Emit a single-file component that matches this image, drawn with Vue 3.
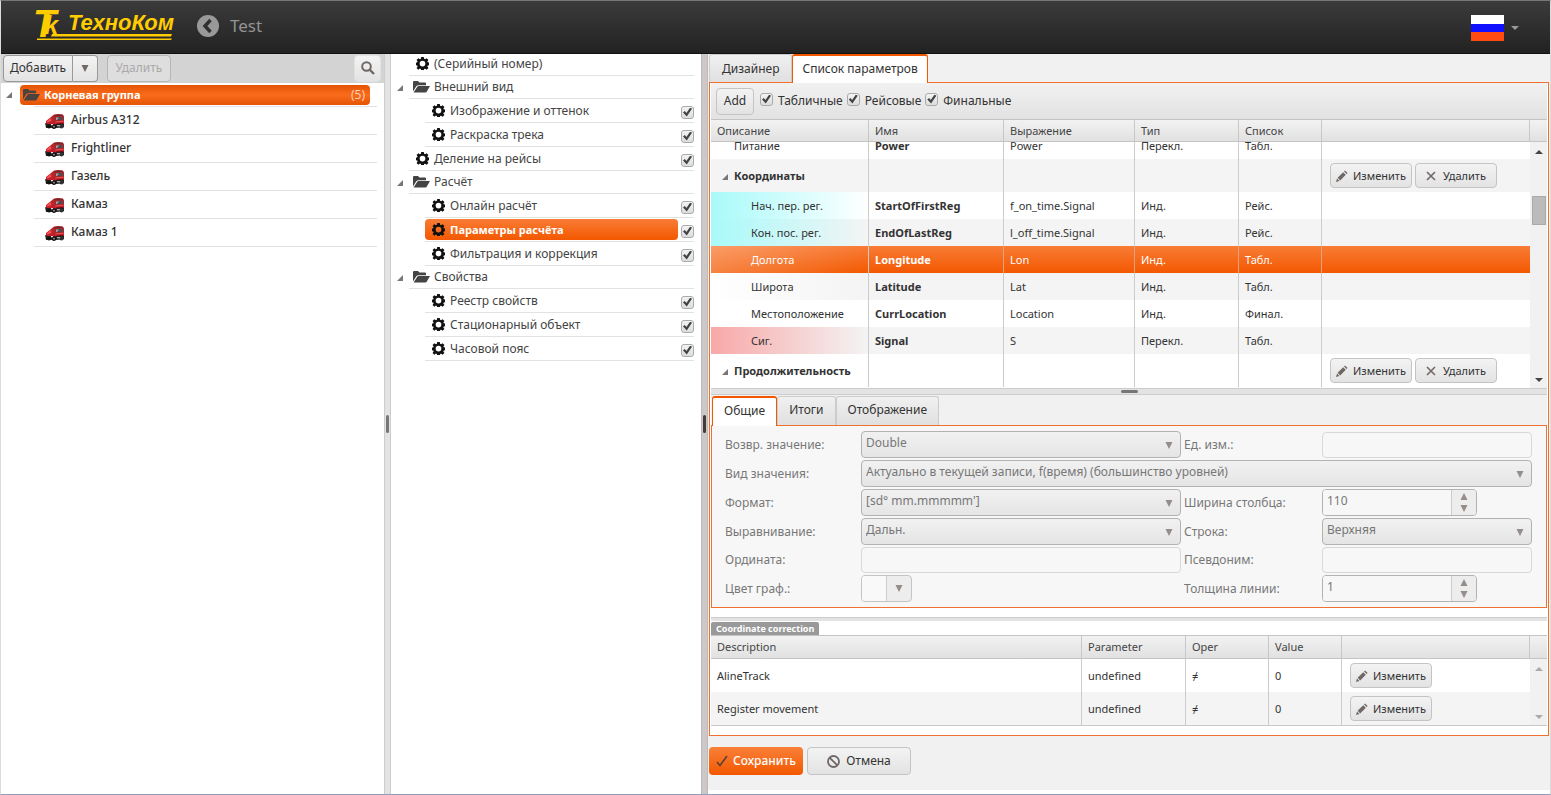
<script setup>
import { ref } from 'vue'

const vehicles = ['Airbus A312', 'Frightliner', 'Газель', 'Камаз', 'Камаз 1']

const nodes = ref([
  { t: '(Серийный номер)', level: 0 },
  { t: 'Внешний вид', folder: true },
  { t: 'Изображение и оттенок', level: 1, check: true },
  { t: 'Раскраска трека', level: 1, check: true },
  { t: 'Деление на рейсы', level: 0, check: true },
  { t: 'Расчёт', folder: true },
  { t: 'Онлайн расчёт', level: 1, check: true },
  { t: 'Параметры расчёта', level: 1, check: true, selected: true },
  { t: 'Фильтрация и коррекция', level: 1, check: true },
  { t: 'Свойства', folder: true },
  { t: 'Реестр свойств', level: 1, check: true },
  { t: 'Стационарный объект', level: 1, check: true },
  { t: 'Часовой пояс', level: 1, check: true }
])

const filters = ref([
  { t: 'Табличные', on: true },
  { t: 'Рейсовые', on: true },
  { t: 'Финальные', on: true }
])

const rows = [
  { d: 'Питание', n: 'Power', e: 'Power', k: 'Перекл.', l: 'Табл.', first: true },
  { d: 'Координаты', group: true },
  { d: 'Нач. пер. рег.', n: 'StartOfFirstReg', e: 'f_on_time.Signal', k: 'Инд.', l: 'Рейс.', tint: 'cyan' },
  { d: 'Кон. пос. рег.', n: 'EndOfLastReg', e: 'l_off_time.Signal', k: 'Инд.', l: 'Рейс.', tint: 'cyan' },
  { d: 'Долгота', n: 'Longitude', e: 'Lon', k: 'Инд.', l: 'Табл.', selected: true },
  { d: 'Широта', n: 'Latitude', e: 'Lat', k: 'Инд.', l: 'Табл.', tint: 'pale' },
  { d: 'Местоположение', n: 'CurrLocation', e: 'Location', k: 'Инд.', l: 'Финал.' },
  { d: 'Сиг.', n: 'Signal', e: 'S', k: 'Перекл.', l: 'Табл.', tint: 'red' },
  { d: 'Продолжительность', group: true }
]

const corrections = ['AlineTrack', 'Register movement']
</script>

<template>
  <div class="app">
    <svg class="defs" aria-hidden="true">
      <symbol id="gear" viewBox="0 0 16 16">
        <path fill-rule="evenodd" d="M6.4 0h3.2l.4 2.2 1.2.5 1.9-1.3 2.2 2.2-1.3 1.9.5 1.1 2.3.4v3l-2.3.4-.5 1.2 1.3 1.9-2.2 2.2-1.9-1.3-1.2.5-.4 2.2H6.4L6 14.8l-1.2-.5-1.9 1.3L.7 13.5 2 11.600l-.5-1.200L0 10V7l1.500-.400L2 5.500.7 3.600l2.200-2.200 1.900 1.300L6 2.200zM8 4.600a3.500 3.500 0 1 0 0 7 3.500 3.500 0 0 0 0-7z" />
      </symbol>
      <symbol id="folder" viewBox="0 0 17 12">
        <path d="M0 10.500V1Q0 0 1 0h4l1.500 1.500H12q1 0 1 1v1.700H5.500Q4 4.200 3.300 5.300zM.6 11.500l3.500-5.400Q4.700 5.100 5.500 5.100H17l-3.300 5.600q-.5.8-1.200.8z" />
      </symbol>
      <symbol id="pencil" viewBox="0 0 12 12">
        <path d="M0 12l1-3.500L3.500 11zM1.600 7.800l5.600-5.600 2.600 2.600-5.600 5.600zM8 1.400l1-1 2.600 2.600-1 1z" />
      </symbol>
      <symbol id="cross" viewBox="0 0 10 10">
        <path d="M1 1l8 8M9 1l-8 8" fill="none" stroke="currentColor" stroke-width="1.600" />
      </symbol>
      <symbol id="down" viewBox="0 0 8 7"><path d="M.5 0h7L4 7z" /></symbol>
      <symbol id="up" viewBox="0 0 8 7"><path d="M.5 7h7L4 0z" /></symbol>
      <symbol id="open" viewBox="0 0 7 7"><path d="M7 0v7H0z" /></symbol>
      <symbol id="truck" viewBox="0 0 20 16">
        <path d="M1 8l5-4 3-2.500Q13 .3 18 1.500l1 2V12l-8 1.500-8-1-2-1z" fill="#c21f27" />
        <path d="M9.500 2.300Q13 1 17.500 2l.5.900-8.500.3z" fill="#6d2a2d" />
        <path d="M10 4l8-.5.500 3.500-8 .700z" fill="#59474a" />
        <path d="M11 4.600l3-.2-2 2.600-1 .100z" fill="#aaa0a2" />
        <path d="M2 8l4-3 .5 3L2 9.500zM10.500 8.500l8-.7v1l-8 .800z" fill="#f0525a" />
        <path d="M11 10.500l7-.8v1.300l-7 .900z" fill="#701116" />
        <path d="M0 10l2.500 1 6 .600 10.500-.8v3.500l-8 .700H1z" fill="#222" />
        <circle cx="4" cy="13.500" r="2" fill="#111" /><circle cx="9" cy="13.700" r="2.200" fill="#111" />
        <circle cx="16.500" cy="13.600" r="2" fill="#333" /><circle cx="9" cy="13.700" r=".9" fill="#999" />
        <path d="M6 11h2v1.200H6zM12 12.200h3v1h-3z" fill="#ddd" />
      </symbol>
    </svg>

    <header class="top">
      <svg class="logo" width="142" height="34" viewBox="0 0 142 34" role="img" aria-label="ТехноКом">
        <g class="brand" fill="#fc0">
          <text class="big" x="-4" y="28">T<tspan class="kay" dx="-12" dy="-3">k</tspan></text>
          <text class="name" x="31" y="21">ТехноКом</text>
          <path d="M15 25h120l-1 2.500H14zM0 29.500h135l-1 1.500H0z" />
        </g>
      </svg>
      <button class="back" aria-label="Назад">
        <svg width="22" height="22" viewBox="0 0 22 22"><circle cx="11" cy="11" r="11" fill="#999" /><path d="M13.500 5L8 11l5.500 6" fill="none" stroke="#303030" stroke-width="3.400" /></svg>
      </button>
      <h1>Test</h1>
      <button class="lang" aria-label="Русский">
        <svg width="33" height="26" viewBox="0 0 33 26"><path fill="#fff" d="M0 0h33v9H0z" /><path fill="#1010ff" d="M0 9h33v9H0z" /><path fill="#ff4b10" d="M0 17h33v9H0z" /></svg>
        <svg class="caret" width="8" height="4" viewBox="0 0 8 4"><path d="M0 0h8L4 4z" fill="#999" /></svg>
      </button>
    </header>

    <div class="body">
      <aside class="left">
        <div class="bar">
          <div class="split">
            <button class="btn">Добавить</button>
            <button class="btn more" aria-label="Ещё"><svg width="8" height="7"><use href="#down" /></svg></button>
          </div>
          <button class="btn off" disabled>Удалить</button>
          <button class="btn find" aria-label="Поиск">
            <svg width="14" height="14" viewBox="0 0 14 14"><circle cx="5.500" cy="5.500" r="4.300" fill="none" stroke="#6f6865" stroke-width="2" /><path d="M8.500 8.500L13 13" stroke="#6f6865" stroke-width="2.400" /></svg>
          </button>
        </div>
        <div class="root">
          <svg class="tri" width="6" height="6"><use href="#open" /></svg>
          <div class="pill">
            <svg width="17" height="12"><use href="#folder" /></svg>
            <b>Корневая группа</b><span class="count">(5)</span>
          </div>
        </div>
        <ul class="vehicles">
          <li v-for="v in vehicles" :key="v"><svg width="20" height="16"><use href="#truck" /></svg>{{ v }}</li>
        </ul>
      </aside>

      <div class="vsplit light"><i></i></div>

      <nav class="mid">
        <ul>
          <li v-for="(n, i) in nodes" :key="n.t" :class="{ folder: n.folder, deep: n.level === 1, selected: n.selected }">
            <svg v-if="n.folder" class="tri" width="6" height="6"><use href="#open" /></svg>
            <div class="line">
              <div class="cap">
                <svg v-if="n.folder" width="17" height="12"><use href="#folder" /></svg>
                <svg v-else class="gear" width="13" height="13"><use href="#gear" /></svg>
                <label v-if="n.check" :for="'n' + i">{{ n.t }}</label>
                <span v-else>{{ n.t }}</span>
              </div>
              <input v-if="n.check" :id="'n' + i" v-model="n.check" type="checkbox">
            </div>
          </li>
        </ul>
      </nav>

      <div class="vsplit dark"><i></i></div>

      <main>
        <div class="tabs main-tabs">
          <button>Дизайнер</button>
          <button class="on">Список параметров</button>
        </div>
        <section class="panel">
          <div class="tools">
            <button class="btn add">Add</button>
            <label v-for="f in filters" :key="f.t"><input v-model="f.on" type="checkbox">{{ f.t }}</label>
          </div>

          <div class="grid">
            <div class="ghead">
              <table class="params">
                <colgroup><col class="c1"><col class="c2"><col class="c3"><col class="c4"><col class="c5"><col></colgroup>
                <thead><tr><th>Описание</th><th>Имя</th><th>Выражение</th><th>Тип</th><th>Список</th><th></th></tr></thead>
              </table>
            </div>
            <div class="gbody scrolled">
              <div class="view">
                <table class="params">
                  <colgroup><col class="c1"><col class="c2"><col class="c3"><col class="c4"><col class="c5"><col></colgroup>
                  <tbody>
                    <tr v-for="r in rows" :key="r.d" :class="[r.tint, { group: r.group, selected: r.selected, first: r.first }]">
                      <td><svg v-if="r.group" class="tri" width="6" height="6"><use href="#open" /></svg>{{ r.d }}</td>
                      <td><b>{{ r.n }}</b></td><td>{{ r.e }}</td><td>{{ r.k }}</td><td>{{ r.l }}</td>
                      <td>
                        <div v-if="r.group" class="acts">
                          <button class="btn small"><svg width="12" height="12"><use href="#pencil" /></svg>Изменить</button>
                          <button class="btn small"><svg width="10" height="10"><use href="#cross" /></svg>Удалить</button>
                        </div>
                      </td>
                    </tr>
                  </tbody>
                </table>
              </div>
              <div class="sb">
                <svg width="8" height="4" viewBox="0 0 8 4"><path d="M0 4h8L4 0z" /></svg>
                <div class="track"><div class="thumb"></div></div>
                <svg width="8" height="4" viewBox="0 0 8 4"><path d="M0 0h8L4 4z" /></svg>
              </div>
            </div>
          </div>

          <div class="hsplit"><i></i></div>

          <div class="tabs sub-tabs">
            <button class="on">Общие</button><button>Итоги</button><button>Отображение</button>
          </div>
          <form class="form" @submit.prevent>
            <label for="ret">Возвр. значение:</label>
            <div class="sel"><select id="ret" disabled><option>Double</option></select><svg width="8" height="7"><use href="#down" /></svg></div>
            <label for="unit" class="second">Ед. изм.:</label>
            <input id="unit" type="text" disabled>

            <label for="kind">Вид значения:</label>
            <div class="sel wide"><select id="kind" disabled><option>Актуально в текущей записи, f(время) (большинство уровней)</option></select><svg width="8" height="7"><use href="#down" /></svg></div>

            <label for="fmt">Формат:</label>
            <div class="sel"><select id="fmt" disabled><option>[sd° mm.mmmmm']</option></select><svg width="8" height="7"><use href="#down" /></svg></div>
            <label for="colw" class="second">Ширина столбца:</label>
            <div class="spin"><input id="colw" type="text" value="110" disabled><div><button disabled aria-label="Больше"><svg width="8" height="7"><use href="#up" /></svg></button><button disabled aria-label="Меньше"><svg width="8" height="7"><use href="#down" /></svg></button></div></div>

            <label for="align">Выравнивание:</label>
            <div class="sel"><select id="align" disabled><option>Дальн.</option></select><svg width="8" height="7"><use href="#down" /></svg></div>
            <label for="line" class="second">Строка:</label>
            <div class="sel"><select id="line" disabled><option>Верхняя</option></select><svg width="8" height="7"><use href="#down" /></svg></div>

            <label for="ord">Ордината:</label>
            <input id="ord" type="text" disabled>
            <label for="alias" class="second">Псевдоним:</label>
            <input id="alias" type="text" disabled>

            <label for="color">Цвет граф.:</label>
            <button id="color" class="color" disabled><span></span><svg width="8" height="7"><use href="#down" /></svg></button>
            <label for="thick" class="second">Толщина линии:</label>
            <div class="spin"><input id="thick" type="text" value="1" disabled><div><button disabled aria-label="Больше"><svg width="8" height="7"><use href="#up" /></svg></button><button disabled aria-label="Меньше"><svg width="8" height="7"><use href="#down" /></svg></button></div></div>
          </form>

          <div class="rule"></div>
          <div class="badge">Coordinate correction</div>
          <div class="ghead low">
            <table class="corr">
              <colgroup><col><col class="k2"><col class="k3"><col class="k4"><col class="k5"></colgroup>
              <thead><tr><th>Description</th><th>Parameter</th><th>Oper</th><th>Value</th><th></th></tr></thead>
            </table>
          </div>
          <div class="gbody end">
            <div class="view">
              <table class="corr">
                <colgroup><col><col class="k2"><col class="k3"><col class="k4"><col class="k5"></colgroup>
                <tbody>
                  <tr v-for="c in corrections" :key="c" class="tall">
                    <td>{{ c }}</td><td>undefined</td><td>≠</td><td>0</td>
                    <td><button class="btn small"><svg width="12" height="12"><use href="#pencil" /></svg>Изменить</button></td>
                  </tr>
                </tbody>
              </table>
            </div>
            <div class="sb idle">
              <svg width="8" height="4" viewBox="0 0 8 4"><path d="M0 4h8L4 0z" /></svg>
              <svg width="8" height="4" viewBox="0 0 8 4"><path d="M0 0h8L4 4z" /></svg>
            </div>
          </div>
        </section>
        <footer>
          <button class="btn save"><svg width="12" height="12" viewBox="0 0 12 12"><path d="M1 7l3 3.500L11 1" fill="none" stroke="#5b4034" stroke-width="1.600" /></svg>Сохранить</button>
          <button class="btn cancel"><svg width="13" height="13" viewBox="0 0 13 13"><circle cx="6.500" cy="6.500" r="5.500" fill="none" stroke="#6f6865" stroke-width="1.800" /><path d="M2.600 2.600l7.800 7.800" stroke="#6f6865" stroke-width="1.800" /></svg>Отмена</button>
        </footer>
      </main>
    </div>
  </div>
</template>

<style>
html, body { margin: 0; background: #fff; }
</style>

<style scoped>
* { box-sizing: border-box; }
.app { height: 100vh; display: flex; flex-direction: column; overflow: hidden; background: #fff; border: 1px solid #dcdcdc; border-top-color: #777; border-bottom-color: #8f9fbd; color: #333; font: 12px/16px "Noto Sans", "Open Sans", sans-serif; }
.defs { position: absolute; width: 0; height: 0; }
button, input, select { font: inherit; color: inherit; margin: 0; }
svg { display: block; flex: none; fill: currentColor; }
ul { list-style: none; margin: 0; padding: 0; }
.top { flex: none; height: 53px; display: flex; align-items: center; padding: 0 31px 2px 36px; background: linear-gradient(#3b3b3b, #222); border-bottom: 1px solid #111; }
.logo { overflow: visible; }
.brand { font-family: "Liberation Sans", sans-serif; font-weight: bold; font-style: italic; }
.big { font-size: 38px; }
.kay { font-size: 25px; }
.name { font-size: 22px; }
.back { margin-left: 18px; padding: 0; border: 0; background: none; }
h1 { margin: 0 0 0 11px; font-size: 17px; font-weight: 400; line-height: 22px; color: #939393; }
.lang { margin-left: auto; display: flex; align-items: center; gap: 7px; padding: 4px 0 0; border: 0; background: none; }

.body { flex: 1; min-height: 0; display: flex; }
.left { width: 383px; flex: none; }
.bar { height: 29px; display: flex; align-items: center; padding: 0 3px 1px 2px; background: #d3d3d3; }
.split { display: flex; }
.btn { display: inline-flex; align-items: center; justify-content: center; gap: 6px; height: 27px; padding: 0 7px; border: 1px solid #c4c4c4; border-radius: 4px; background: linear-gradient(#f3f3f3, #e3e3e3); color: #333; white-space: nowrap; }
.btn svg { color: #6f6865; }
.split .btn { border-color: #999; width: 70px; border-radius: 4px 0 0 4px; padding: 0; }
.split .more { width: 25px; border-left: 0; border-radius: 0 4px 4px 0; }
.off { margin-left: 9px; width: 64px; background: #dedede; border-color: #b5b5b5; color: #aaa; }
.find { margin-left: auto; width: 27px; padding: 0; border-color: #e2e2e2; }
.tri { color: #777; }
.root { display: flex; align-items: center; height: 23px; margin-right: 7px; padding-left: 5px; }
.pill { flex: 1; display: flex; align-items: center; gap: 4px; height: 20px; margin: 0 7px 0 8px; padding: 0 5px 0 3px; border-radius: 4px; background: linear-gradient(#e35504, #fa6b1b 50%, #e35504); color: #fff; }
.pill svg { color: #4c4340; }
.pill b { font-size: 11px; }
.count { margin-left: auto; color: #ffd0b5; }
.vehicles { margin: 0 7px 0 33px; border-top: 1px solid #e2e2e2; }
.vehicles li { display: flex; align-items: center; gap: 6px; height: 28px; padding: 0 0 2px 11px; border-bottom: 1px solid #e2e2e2; font-weight: 500; }
.vehicles svg { margin-top: 3px; }
.vsplit { flex: none; width: 7px; display: flex; align-items: center; justify-content: center; border: solid #ccc; border-width: 0 1px; background: #e3e3e3; }
.vsplit i { width: 3px; height: 18px; border-radius: 2px; background: #777; }
.dark { background: #cdc8c5; border-color: #bbb; }
.dark i { background: #443c38; }

.mid { width: 310px; flex: none; overflow: hidden; }
.mid ul { margin: -2px 7px 0 6px; }
.mid li { display: flex; align-items: center; gap: 6px; height: 24px; padding-left: 12px; color: #444; }
.mid li.folder { height: 23px; padding-left: 0; }
.mid li.deep { padding-left: 28px; }
.line { flex: 1; display: flex; align-items: center; height: 100%; border-bottom: 1px solid #e2e2e2; }
.cap { flex: 1; display: flex; align-items: center; gap: 5px; height: 21px; padding-left: 7px; border-radius: 4px; }
.folder .cap { gap: 4px; padding-left: 4px; color: #444; }
.gear { color: #111; }
.selected .cap { background: linear-gradient(#f87c36, #f35800); color: #fff; font-weight: bold; font-size: 11px; }
.line input { margin: 3px 0 0 3px; }
input[type=checkbox] { appearance: none; flex: none; width: 13px; height: 13px; border: 1px solid #aaa; border-radius: 3px; background: linear-gradient(#f3f3f3, #ddd); }
input[type=checkbox]:checked::before { content: ""; display: block; width: 9px; height: 9px; margin: 1px; background: #444; clip-path: polygon(0 55%, 20% 40%, 38% 60%, 80% 0, 100% 14%, 42% 100%); }

main { flex: 1; min-width: 0; display: flex; flex-direction: column; padding: 0 1px; background: linear-gradient(#f1f1f1, #f1f1f1) no-repeat; background-size: 100% calc(100% - 4px); }
.tabs { display: flex; flex: none; }
.tabs button { padding: 0 12px; border: 1px solid #ccc; border-bottom: 0; background: linear-gradient(#f0f0f0, #e0e0e0); border-radius: 3px 3px 0 0; }
.main-tabs { height: 28px; }
.tabs .on { position: relative; margin: 0 0 -1px; padding-bottom: 2px; border-color: #f35800; border-top-width: 2px; background: #fff; }
.main-tabs .on { padding: 0 9px 2px; }
.panel { flex: 1; min-height: 0; display: flex; flex-direction: column; border: 1px solid #f07030; padding: 0 1px 9px; background: #fff; }
.tools { flex: none; height: 36px; display: flex; align-items: center; padding: 0 5px; background: linear-gradient(#f1f1f1, #e2e2e2); }
.tools label { display: flex; align-items: center; gap: 5px; margin-left: 4px; }
.tools label input { margin-bottom: 4px; }
.add { width: 38px; padding: 0; margin-right: 2px; }
.grid { flex: 1; min-height: 0; display: flex; flex-direction: column; font-size: 11px; }
.ghead { flex: none; padding-right: 17px; border: solid #c4c4c4; border-width: 1px 0; background: linear-gradient(#f2f2f2, #e1e1e1); font-size: 11px; }
.ghead th { height: 21px; padding: 0 6px; text-align: left; font-weight: 400; color: #444; border-right: 1px solid #c8c8c8; }
.low th { height: 22px; }
.params td, .corr td, .params th, .corr th { white-space: nowrap; overflow: hidden; }
table { width: 100%; table-layout: fixed; border-collapse: separate; border-spacing: 0; }
.c1 { width: 158px; } .c2 { width: 135px; } .c3 { width: 131px; } .c4 { width: 104px; } .c5 { width: 83px; }
.k2 { width: 104px; } .k3 { width: 83px; } .k4 { width: 73px; } .k5 { width: 188px; }
.gbody { display: flex; min-height: 0; flex: 1; font-size: 11px; }
.end { flex: none; border-bottom: 1px solid #c8c8c8; }
.view { flex: 1; min-width: 0; overflow: hidden; }
.scrolled table { margin-top: -10px; }
td { height: 27px; padding: 0 6px; border-right: 1px solid #ccc; line-height: 16px; }
td:last-child { border-right: 0; padding: 0 8px; }
.params td:first-child { padding-left: 40px; border-right-color: #ccc; }
.params .first td:first-child { padding-left: 23px; }
.params tr:nth-child(even), .corr tr:nth-child(even) { background: #f4f4f4; }
.group td { height: 33px; font-weight: bold; }
.params .group td:first-child { padding-left: 11px; }
.group .tri { display: inline-block; margin-right: 6px; }
.tall td { height: 33px; }
.cyan td:first-child { background: linear-gradient(90deg, #a8fafa, transparent); }
.red td:first-child { background: linear-gradient(90deg, #f8a8a8, transparent); }
.pale td:first-child { background: linear-gradient(90deg, #fff, transparent); }
.params tr.selected { background: linear-gradient(#f87c36, #f35800); color: #fff; }
.selected td { border-right-color: #e6a27c; }
.selected td:first-child { background: linear-gradient(90deg, #ffffff40, transparent); }
.acts { display: flex; gap: 3px; }
.small { height: 25px; width: 82px; padding: 0; font-size: 11px; font-weight: 400; gap: 5px; }
.acts .small + .small { gap: 7px; }
.sb { width: 17px; display: flex; flex-direction: column; align-items: center; justify-content: space-between; padding: 8px 0 6px; background: #f1f1f1; color: #444; }
.idle { color: #aaa; }
.track { flex: 1; width: 14px; margin: 42px 0 4px; }
.thumb { height: 29px; background: #bbb; border: 1px solid #aaa; }
.hsplit { flex: none; height: 7px; display: flex; align-items: center; justify-content: center; background: #e3e3e3; border: solid #ccc; border-width: 1px 0; }
.hsplit i { width: 17px; height: 3px; border-radius: 2px; background: #777; }
.sub-tabs { height: 30px; padding: 1px 1px 0; background: #f1f1f1; }
.sub-tabs button { padding: 0 11px 2px; }
.form { flex: none; display: grid; grid-template-columns: 136px 320fr 141px 210fr; row-gap: 2px; align-items: center; margin: 0; padding: 5px 14px 5px 13px; border: 1px solid #f07030; background: #f7f7f7; color: #777; }
.second { padding-left: 3px; }
.wide { grid-column: 2 / 5; }
.sel { position: relative; }
.sel select { appearance: none; display: block; width: 100%; height: 27px; padding: 0 20px 3px 4px; border: 1px solid #b2b2b2; border-radius: 4px; background: linear-gradient(#f1f1f1, #e5e5e5); opacity: 1; color: #777; }
.sel svg, .color svg, .spin svg { color: #948d89; }
.sel svg { position: absolute; right: 8px; top: 11px; }
.form > input { width: 100%; height: 26px; border: 1px solid #d8d8d8; border-radius: 4px; background: #f7f7f7; }
.spin { display: flex; width: 155px; height: 27px; border: 1px solid #b2b2b2; border-radius: 4px; overflow: hidden; }
.spin input { flex: 1; min-width: 0; border: 0; background: #f7f7f7; padding: 0 4px 3px; }
.spin div { width: 25px; display: flex; flex-direction: column; justify-content: center; border-left: 1px solid #ccc; background: #ededed; }
.spin button { display: flex; justify-content: center; align-items: center; height: 12px; padding: 0; border: 0; background: none; }
.color { display: flex; align-items: center; width: 51px; height: 27px; padding: 0 8px 0 0; gap: 8px; border: 1px solid #c4c4c4; border-radius: 4px; background: #ededed; overflow: hidden; }
.color span { width: 25px; height: 25px; background: #f9f9f9; border-right: 1px solid #ccc; }
.rule { flex: none; height: 4px; margin: 9px 0 1px; background: #e3e3e3; border-top: 1px solid #ccc; }
.badge { align-self: flex-start; height: 13px; padding: 0 5px; border-radius: 2px 2px 0 0; background: #999; color: #fff; font-size: 9px; line-height: 13px; font-weight: bold; }
footer { flex: none; display: flex; gap: 4px; padding: 11px 0 19px; }
.save { width: 94px; padding: 0; border: 0; background: linear-gradient(#f98039, #f35800); color: #fff; font-weight: 500; gap: 5px; height: 28px; }
.cancel { width: 104px; height: 28px; }
</style>
